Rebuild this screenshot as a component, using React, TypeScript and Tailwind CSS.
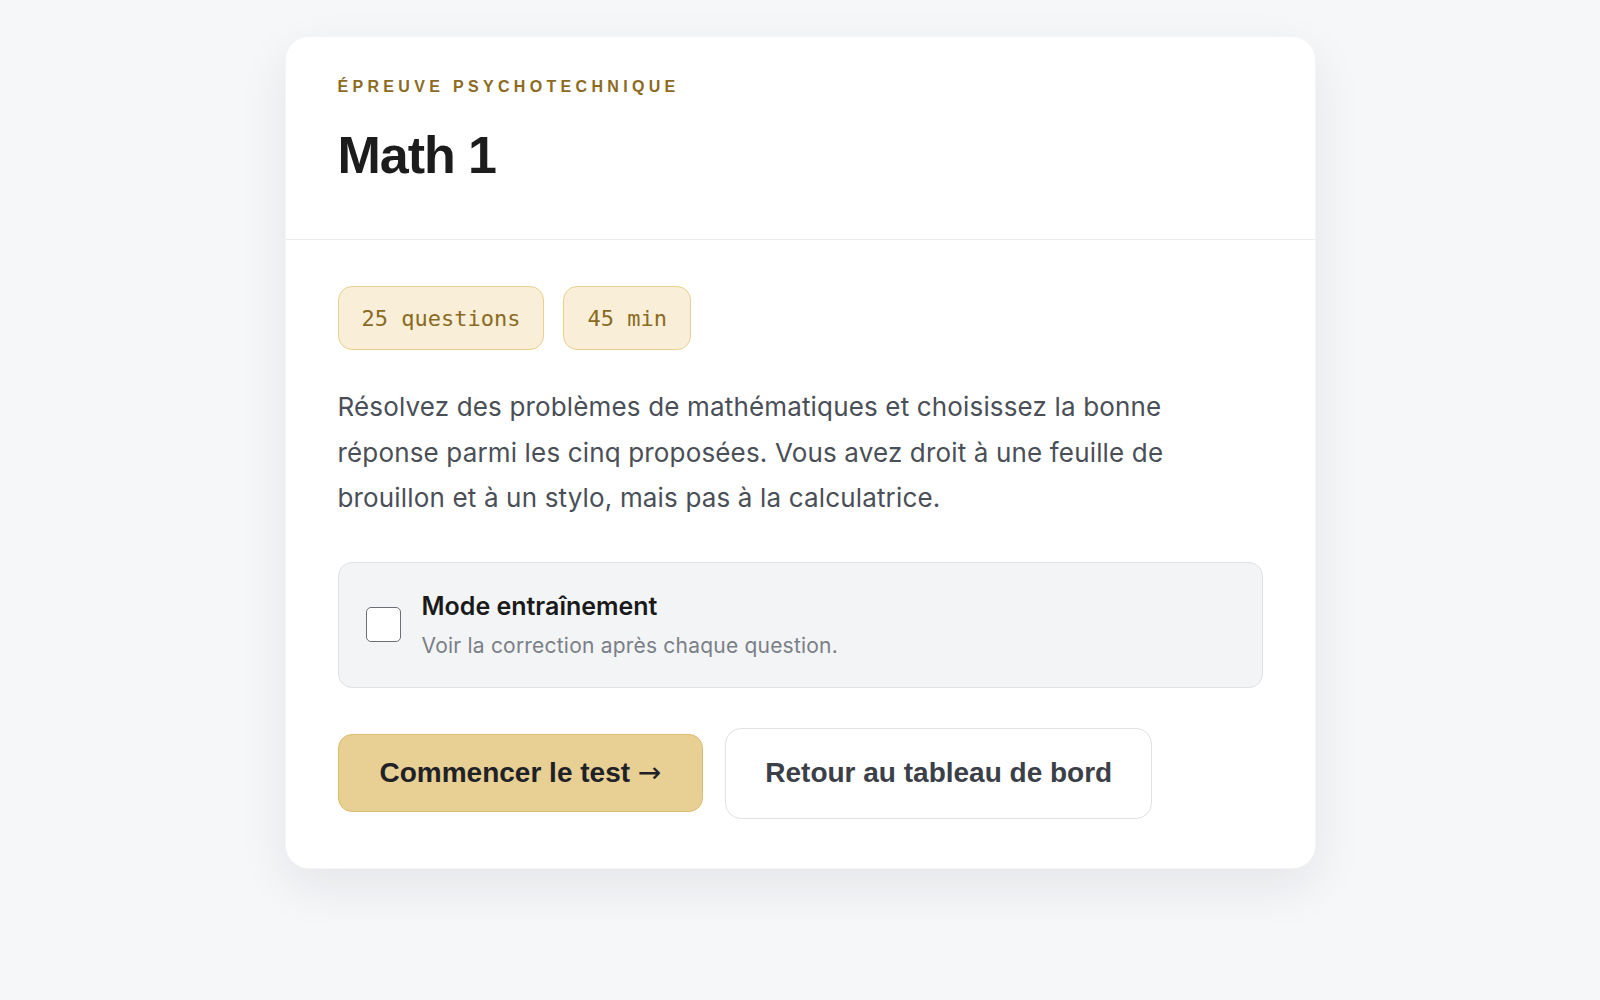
import { useState } from "react";

export default function App() {
  const [practice, setPractice] = useState(false);

  return (
    <div className="min-h-screen bg-[#f6f7f9] pt-9 font-['Inter',sans-serif]">
      <div className="mx-auto w-[1031px] rounded-3xl border border-black/[0.04] bg-white shadow-[0_18px_50px_rgba(15,23,42,0.08)]">
        {/* Header */}
        <div className="border-b border-[#ebebeb] px-[52px] pt-[38px] pb-14">
          <p className="font-['Liberation_Sans',sans-serif] text-[16px] leading-6 font-bold tracking-[0.27em] text-[#8c6a22] uppercase">
            Épreuve psychotechnique
          </p>
          <h1 className="mt-7 font-['Liberation_Sans',sans-serif] text-[52px] leading-[56px] font-bold tracking-[-0.02em] text-[#1c1c1c]">
            Math 1
          </h1>
        </div>

        {/* Body */}
        <div className="px-[52px] pt-[46px] pb-[49px]">
          <div className="flex gap-[19px]">
            <span className="flex h-16 items-center rounded-[14px] border border-[#e9cf90] bg-[#f9efd8] px-[23px] font-['DejaVu_Sans_Mono',monospace] text-[22px] text-[#8a6a22]">
              25 questions
            </span>
            <span className="flex h-16 items-center rounded-[14px] border border-[#e9cf90] bg-[#f9efd8] px-[23px] font-['DejaVu_Sans_Mono',monospace] text-[22px] text-[#8a6a22]">
              45 min
            </span>
          </div>

          <p className="mt-[34px] max-w-[850px] text-[26px] leading-[45.5px] tracking-[0.006em] text-[#4a4f57]">
            Résolvez des problèmes de mathématiques et choisissez la bonne
            réponse parmi les cinq proposées. Vous avez droit à une feuille de
            brouillon et à un stylo, mais pas à la calculatrice.
          </p>

          <label className="mt-[41px] flex h-[126px] cursor-pointer items-center gap-[21px] rounded-[14px] border border-[#dfe1e5] bg-[#f3f4f6] pl-[27px]">
            <input
              type="checkbox"
              checked={practice}
              onChange={(e) => setPractice(e.target.checked)}
              className="h-[35px] w-[35px] shrink-0 cursor-pointer appearance-none rounded-[5px] border-[1.5px] border-[#6b6f76] bg-white checked:bg-[#e8cf94]"
            />
            <div>
              <div className="text-[25px] leading-8 font-semibold text-[#1a1a1a]">
                Mode entraînement
              </div>
              <div className="mt-[10px] text-[21px] leading-7 tracking-[0.01em] text-[#7a7f87]">
                Voir la correction après chaque question.
              </div>
            </div>
          </label>

          <div className="mt-10 flex items-center gap-[22px] font-['Liberation_Sans',sans-serif]">
            <button className="h-[78px] rounded-[14px] border border-[#dcbd6e] bg-[#e8cf94] px-[41px] text-[28px] font-bold text-[#1e2227]">
              Commencer le test{" "}
              <span className="font-['DejaVu_Sans',sans-serif] font-normal">→</span>
            </button>
            <button className="h-[91px] rounded-[16px] border-[1.5px] border-[#e0e2e6] bg-white px-[39px] text-[28px] font-bold text-[#3b4048]">
              Retour au tableau de bord
            </button>
          </div>
        </div>
      </div>
    </div>
  );
}
